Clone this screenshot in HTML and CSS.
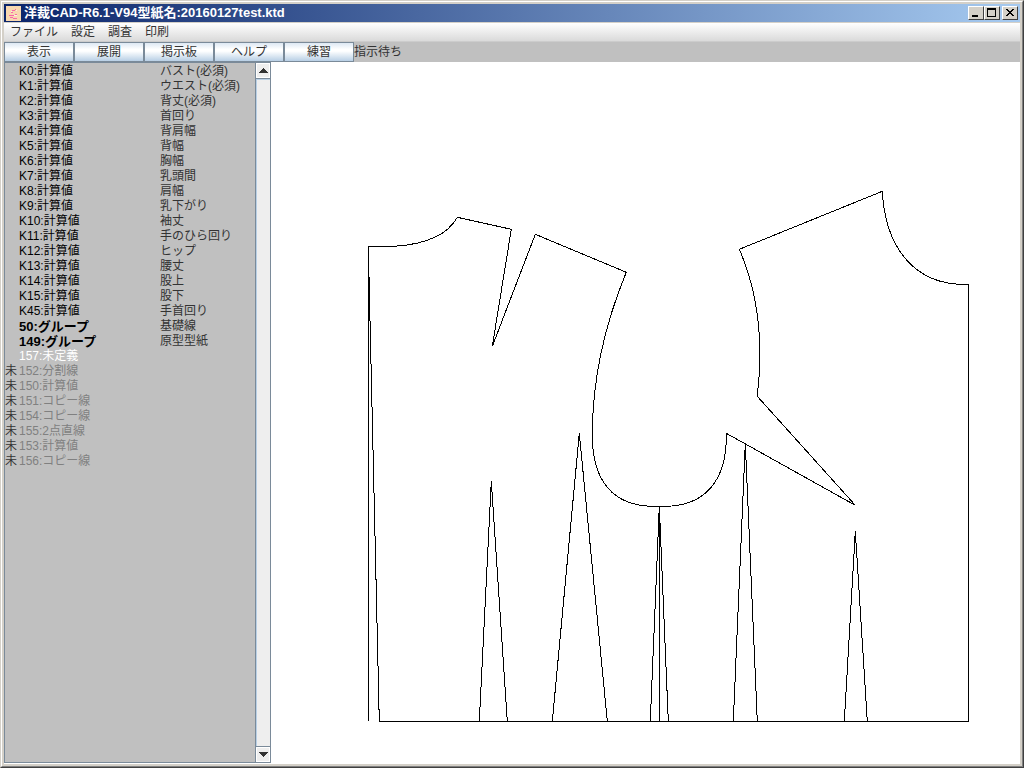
FILE: index.html
```html
<!DOCTYPE html>
<html lang="ja">
<head>
  <meta charset="UTF-8">
  <meta name="viewport" content="width=device-width, initial-scale=1.0">
  <title>洋裁CAD-R6.1-V94</title>
  <link rel="stylesheet" href="styles.css">
</head>
<body>
  <div class="window">
    <div class="window-inner">
      <header class="title-bar">
        <svg class="app-icon" width="15" height="15" viewBox="0 0 15 15" shape-rendering="crispEdges">
          <rect width="15" height="15" fill="#f8d8b0"/>
          <path d="M6 4h3v1H6zM9 3h1v1H9zM5 6h2v1H5zM3 9h5v1H3zM9 8h2v1H9zM4 11h3v1H4zM7 12h4v1H7z" fill="#f868a8"/>
          <path d="M10 4h1v1h-1zM8 9h3v1H8zM5 5h1v1H5z" fill="#fff0e0"/>
        </svg>
        <h1>洋裁CAD-R6.1-V94型紙名:20160127test.ktd</h1>
        <div class="window-buttons">
          <button type="button" aria-label="最小化">
            <svg width="14" height="12" viewBox="0 0 14 12"><path d="M3 8h6v2H3z"/></svg>
          </button>
          <button type="button" aria-label="最大化">
            <svg width="14" height="12" viewBox="0 0 14 12"><path fill-rule="evenodd" d="M2 1h9v9H2zM3 3h7v6H3z"/></svg>
          </button>
          <button type="button" aria-label="閉じる" class="close">
            <svg width="14" height="12" viewBox="0 0 14 12"><path d="M3 2h2v1h1v1h2V3h1V2h2v1h-1v1H9v1H8v1h1v1h1v1h1v1H9V8H8V7H6v1H5v1H3V8h1V7h1V6h1V5H5V4H4V3H3z"/></svg>
          </button>
        </div>
      </header>

      <nav class="menu-bar">
        <button type="button">ファイル</button>
        <button type="button">設定</button>
        <button type="button">調査</button>
        <button type="button">印刷</button>
      </nav>

      <div class="toolbar">
        <button type="button">表示</button>
        <button type="button">展開</button>
        <button type="button">掲示板</button>
        <button type="button">ヘルプ</button>
        <button type="button">練習</button>
        <span class="status">指示待ち</span>
      </div>

      <main class="content">
        <section class="side-panel">
          <div class="list">
            <table>
              <tbody>
                <tr><td></td><td>K0:計算値</td><td>バスト(必須)</td></tr>
                <tr><td></td><td>K1:計算値</td><td>ウエスト(必須)</td></tr>
                <tr><td></td><td>K2:計算値</td><td>背丈(必須)</td></tr>
                <tr><td></td><td>K3:計算値</td><td>首回り</td></tr>
                <tr><td></td><td>K4:計算値</td><td>背肩幅</td></tr>
                <tr><td></td><td>K5:計算値</td><td>背幅</td></tr>
                <tr><td></td><td>K6:計算値</td><td>胸幅</td></tr>
                <tr><td></td><td>K7:計算値</td><td>乳頭間</td></tr>
                <tr><td></td><td>K8:計算値</td><td>肩幅</td></tr>
                <tr><td></td><td>K9:計算値</td><td>乳下がり</td></tr>
                <tr><td></td><td>K10:計算値</td><td>袖丈</td></tr>
                <tr><td></td><td>K11:計算値</td><td>手のひら回り</td></tr>
                <tr><td></td><td>K12:計算値</td><td>ヒップ</td></tr>
                <tr><td></td><td>K13:計算値</td><td>腰丈</td></tr>
                <tr><td></td><td>K14:計算値</td><td>股上</td></tr>
                <tr><td></td><td>K15:計算値</td><td>股下</td></tr>
                <tr><td></td><td>K45:計算値</td><td>手首回り</td></tr>
                <tr class="group"><td></td><td>50:グループ</td><td>基礎線</td></tr>
                <tr class="group"><td></td><td>149:グループ</td><td>原型型紙</td></tr>
                <tr class="selected"><td></td><td>157:未定義</td><td></td></tr>
                <tr class="pending"><td>未</td><td>152:分割線</td><td></td></tr>
                <tr class="pending"><td>未</td><td>150:計算値</td><td></td></tr>
                <tr class="pending"><td>未</td><td>151:コピー線</td><td></td></tr>
                <tr class="pending"><td>未</td><td>154:コピー線</td><td></td></tr>
                <tr class="pending"><td>未</td><td>155:2点直線</td><td></td></tr>
                <tr class="pending"><td>未</td><td>153:計算値</td><td></td></tr>
                <tr class="pending"><td>未</td><td>156:コピー線</td><td></td></tr>
              </tbody>
            </table>
          </div>
          <div class="scrollbar">
            <button type="button" aria-label="上へ">
              <svg width="9" height="5" viewBox="0 0 9 5"><path d="M4 0h1v1h1v1h1v1h1v1h1v1H0V4h1V3h1V2h1V1h1z"/></svg>
            </button>
            <div class="track"></div>
            <button type="button" aria-label="下へ">
              <svg width="9" height="5" viewBox="0 0 9 5"><path d="M4 5h1V4h1V3h1V2h1V1h1V0H0v1h1v1h1v1h1v1h1z"/></svg>
            </button>
          </div>
        </section>

        <section class="canvas">
          <svg viewBox="271 62 749 701" preserveAspectRatio="xMinYMin slice">
            <g transform="translate(.3 .3)">
              <!-- back bodice, armholes and front bodice -->
              <path d="M368 721V246H394C425 244 447 235 457 217L511 229L492 346L535 234L626 272
                C609 313 592 370 592 435C592 480 612 506 654 506H664C705 506 727 480 726 433
                L855 505L757 396C763 345 759 295 739 249L882 191C885 248 915 286 968 284
                V721H379L368 246"/>
              <!-- waist darts -->
              <path d="M479 721L491 481L507 721"/>
              <path d="M552 721L579 433L607 721"/>
              <path d="M650 721L659 506L668 721M659 506V721"/>
              <path d="M733 721L745 443L757 721"/>
              <path d="M844 721L855 531L867 721"/>
            </g>
          </svg>
        </section>
      </main>
    </div>
  </div>
</body>
</html>
```
FILE: styles.css
```css
* {
  box-sizing: border-box;
}

body {
  margin: 0;
  font-family: "Liberation Sans", "Noto Sans CJK JP", sans-serif;
  font-size: 12px;
  color: #333;
}

button {
  margin: 0;
  padding: 0;
  font: inherit;
  color: inherit;
}

/* Window frame */
.window {
  display: flex;
  height: 100vh;
  background-color: #d4d0c8;
  border: 1px solid #d4d0c8;
  border-right-color: #404040;
  border-bottom-color: #404040;
}

.window-inner {
  flex: 1;
  min-width: 0;
  display: flex;
  flex-direction: column;
  padding: 2px;
  border: 1px solid #fff;
  border-right-color: #808080;
  border-bottom-color: #808080;
}

.title-bar {
  display: flex;
  align-items: center;
  height: 18px;
  margin-bottom: 1px;
  padding: 0 2px;
  background: linear-gradient(to right, #0a246a, #a6caf0);
}

.app-icon {
  margin-right: 3px;
}

.title-bar h1 {
  flex: 1;
  margin: 0;
  font-size: 13px;
  line-height: 18px;
  color: #fff;
  white-space: nowrap;
}

.window-buttons {
  display: flex;
}

.window-buttons button {
  width: 16px;
  height: 14px;
  background-color: #d4d0c8;
  border: 1px solid #fff;
  border-right-color: #404040;
  border-bottom-color: #404040;
}

.window-buttons .close {
  margin-left: 2px;
}

.window-buttons svg {
  display: block;
}

/* Menu */
.menu-bar {
  display: flex;
  gap: 1px;
  height: 19px;
  background: linear-gradient(#fff, #dadada);
  border-bottom: 1px solid #ccc;
}

.menu-bar button {
  padding: 1px 6px 0;
  line-height: 17px;
  background: none;
  border: none;
}

/* Toolbar */
.toolbar {
  display: flex;
  height: 20px;
  background-color: #c0c0c0;
}

.toolbar button {
  width: 70px;
  padding-top: 1px;
  line-height: 17px;
  background: linear-gradient(#dde8f3, #fff 35%, #fff 45%, #b8cfe5);
  border: 1px solid #7a8a99;
}

.status {
  padding-top: 1px;
  line-height: 19px;
}

/* Item list */
.content {
  flex: 1;
  display: flex;
  min-height: 0;
  background-color: #fff;
}

.side-panel {
  display: flex;
  width: 267px;
  margin-bottom: 1px;
  background-color: #c0c0c0;
  border: 1px solid #7a8a99;
}

.list {
  flex: 1;
  padding-top: 1px;
  overflow: hidden;
}

.list table {
  width: 100%;
  table-layout: fixed;
  border-collapse: collapse;
}

.list td {
  height: 15px;
  padding: 0;
  line-height: 15px;
  white-space: nowrap;
}

.list td:nth-child(1) {
  width: 14px;
}

.list td:nth-child(2) {
  width: 141px;
  color: #000;
}

.list .group td:nth-child(2) {
  font-size: 13px;
  font-weight: bold;
}

.list .selected td:nth-child(2) {
  color: #fff;
}

.list .pending td:nth-child(2) {
  color: #808080;
}

.scrollbar {
  display: flex;
  flex-direction: column;
  width: 15px;
  border-left: 1px solid #7a8a99;
}

.scrollbar button {
  display: flex;
  align-items: center;
  justify-content: center;
  height: 15px;
  background-color: #eee;
  border: 1px solid #fff;
}

.scrollbar svg {
  fill: #333;
}

.scrollbar .track {
  flex: 1;
  background-color: #eee;
  border: 1px solid #7a8a99;
  border-width: 1px 0;
  box-shadow: inset 1px 1px #b8cfe5;
}

/* Drawing area */
.canvas {
  flex: 1;
  min-width: 0;
  margin-bottom: 1px;
}

.canvas svg {
  display: block;
  width: 100%;
  height: 100%;
  fill: none;
  stroke: #000;
  shape-rendering: crispEdges;
}
```
